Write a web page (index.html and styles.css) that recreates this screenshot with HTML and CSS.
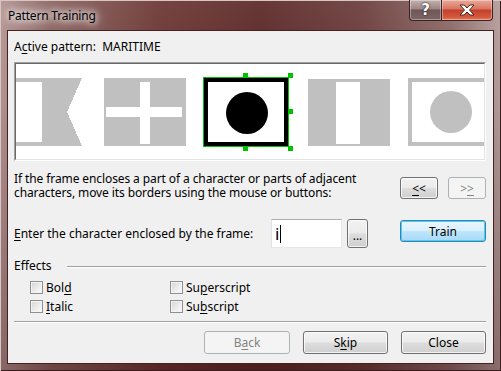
FILE: index.html
```html
<!DOCTYPE html>
<html lang="en">
<head>
    <meta charset="UTF-8" />
    <title>Pattern Training</title>
    <link rel="stylesheet" href="styles.css">
</head>
<body>
    <div class="window">
        <div class="titlebar">
            <span class="title">Pattern Training</span>
            <div class="caption-buttons">
                <div class="cap-btn help">?</div>
                <div class="cap-btn close">
                    <svg width="16" height="12" viewBox="0 0 16 12">
                        <path d="M1 1 H5 L8 4 L11 1 H15 L10.5 6 L15 11 H11 L8 8 L5 11 H1 L5.5 6 Z" fill="#fff" stroke="#4a2a22" stroke-width="1"/>
                    </svg>
                </div>
            </div>
        </div>

        <div class="client">
            <div class="active-row">A<u>c</u>tive pattern:&nbsp; MARITIME</div>

            <!-- recognised glyph strip, drawn in page coordinates -->
            <div class="pattern-box">
                <svg class="strip" width="468" height="95" viewBox="17 64 468 95" shape-rendering="crispEdges">
                    <polygon points="10,78 83,78 68,112 83,146 10,146" fill="#c0c0c0"/>
                    <rect x="10" y="82" width="33" height="60" fill="#fff"/>

                    <rect x="105" y="78" width="82" height="68" fill="#c0c0c0"/>
                    <rect x="141" y="82" width="10" height="62" fill="#fff"/>
                    <rect x="107" y="107" width="76" height="10" fill="#fff"/>

                    <rect x="204" y="77" width="86" height="70" fill="#000"/>
                    <rect x="209" y="82" width="76" height="60" fill="#fff"/>
                    <circle cx="248" cy="113" r="21" fill="#000" shape-rendering="auto"/>
                    <rect x="204.5" y="77.5" width="85" height="69" fill="none" stroke="#00c000"/>
                    <rect x="244" y="73" width="5" height="5" fill="#00c000"/>
                    <rect x="289" y="73" width="5" height="5" fill="#00c000"/>
                    <rect x="289" y="109" width="5" height="5" fill="#00c000"/>
                    <rect x="289" y="146" width="5" height="5" fill="#00c000"/>
                    <rect x="244" y="146" width="5" height="5" fill="#00c000"/>

                    <rect x="309" y="79" width="82" height="67" fill="#c0c0c0"/>
                    <rect x="337" y="82" width="24" height="62" fill="#fff"/>

                    <rect x="409" y="78" width="80" height="68" fill="#c0c0c0"/>
                    <rect x="413" y="82" width="76" height="60" fill="#fff"/>
                    <circle cx="452" cy="112" r="21" fill="#c0c0c0" shape-rendering="auto"/>
                </svg>
            </div>

            <div class="hint-row">
                <p class="hint">If the frame encloses a part of a character or parts of adjacent<br>characters, move its borders using the mouse or buttons:</p>
                <div class="nav-buttons">
                    <button class="btn nav"><u>&lt;</u>&lt;</button>
                    <button class="btn nav" disabled>&gt;<u>&gt;</u></button>
                </div>
            </div>

            <div class="enter-row">
                <span class="enter-label"><u>E</u>nter the character enclosed by the frame:</span>
                <div class="char-input">i<span class="caret"></span></div>
                <button class="btn dots">...</button>
                <button class="btn default train">Train</button>
            </div>

            <div class="group-head">
                <span>Effects</span>
                <div class="etched"></div>
            </div>

            <div class="effects">
                <label class="check"><span class="box"></span><span>Bol<u>d</u></span></label>
                <label class="check"><span class="box"></span><span>Su<u>p</u>erscript</span></label>
                <label class="check"><span class="box"></span><span><u>I</u>talic</span></label>
                <label class="check"><span class="box"></span><span>Su<u>b</u>script</span></label>
            </div>

            <div class="separator"></div>

            <div class="footer">
                <button class="btn wide" disabled>B<u>a</u>ck</button>
                <button class="btn wide">S<u>k</u>ip</button>
                <button class="btn wide">Close</button>
            </div>
        </div>
    </div>
</body>
</html>
```

FILE: styles.css
```css
html, body {
    margin: 0;
    padding: 0;
    width: 100%;
    height: 100%;
    overflow: hidden;
}

body {
    font-family: "Noto Sans", "Open Sans", sans-serif;
    font-size: 12px;
    color: #000;
}

u {
    text-decoration-thickness: 1px;
    text-underline-offset: 2px;
}

.window {
    width: 501px;
    height: 371px;
    display: flex;
    flex-direction: column;
    box-sizing: border-box;
    background:
        linear-gradient(180deg, rgba(255, 255, 255, 0.08) 0%, rgba(0, 0, 0, 0) 25%, rgba(40, 5, 5, 0.3) 100%),
        linear-gradient(90deg, #b29492 0%, #8a625f 10%, #6a3533 32%, #5a2726 52%, #693b39 72%, #8a6866 90%, #b39c9a 100%);
    box-shadow: inset 1px 1px 0 #d9c6c4, inset -1px -1px 0 #3a1c1c;
}

/* title bar */
.titlebar {
    height: 30px;
    display: flex;
    align-items: flex-start;
    justify-content: space-between;
    flex-shrink: 0;
}

.title {
    margin: 8px 0 0 8px;
    line-height: 16px;
    letter-spacing: -0.2px;
    text-shadow: 0 0 6px #fff, 0 0 10px #fff, 0 0 14px rgba(255, 255, 255, 0.9);
}

.caption-buttons {
    display: flex;
    margin-right: 8px;
}

.cap-btn {
    height: 20px;
    display: flex;
    align-items: center;
    justify-content: center;
    border: 1px solid #3c2222;
    border-top: none;
    box-shadow: inset 0 0 0 1px rgba(255, 255, 255, 0.35);
}

.help {
    width: 31px;
    border-radius: 0 0 0 4px;
    border-right: none;
    background: linear-gradient(180deg, #c4b1b0 0%, #9c8584 45%, #6e5655 50%, #7c6665 100%);
    color: #fff;
    font-family: "DejaVu Sans", sans-serif;
    font-weight: bold;
    font-size: 15px;
    text-shadow: 0 0 1px #222, 0 0 2px #222;
}

.close {
    width: 50px;
    border-radius: 0 0 4px 0;
    background: linear-gradient(180deg, #e9a99a 0%, #d9745f 45%, #c2402b 50%, #d3583e 85%, #e27b5c 100%);
}

/* client area */
.client {
    flex: 1;
    margin: 0 7px 7px 7px;
    border: 1px solid #45221f;
    background: #f0f0f0;
    padding: 0 7px 0 6px;
    display: flex;
    flex-direction: column;
}

.active-row {
    margin-top: 8px;
    line-height: 15px;
    height: 15px;
}

.pattern-box {
    margin-top: 8px;
    height: 99px;
    box-sizing: border-box;
    border-style: solid;
    border-width: 1px;
    border-color: #a0a0a0 #ffffff #ffffff #a0a0a0;
    background: #fff;
}

.strip {
    display: block;
    border-top: 1px solid #696969;
    border-left: 1px solid #696969;
    border-right: 1px solid #e3e3e3;
    border-bottom: 1px solid #e3e3e3;
}

.hint-row {
    margin-top: 11px;
    display: flex;
    justify-content: space-between;
    align-items: flex-start;
}

.hint {
    margin: 0;
    line-height: 14px;
    letter-spacing: -0.1px;
}

.nav-buttons {
    margin-top: 5px;
    display: flex;
    gap: 10px;
}

/* buttons */
.btn {
    font-family: inherit;
    font-size: 12px;
    color: #000;
    height: 23px;
    padding: 0;
    box-sizing: border-box;
    border: 1px solid #707070;
    border-radius: 3px;
    background: linear-gradient(180deg, #f2f2f2 0%, #ebebeb 48%, #dddddd 52%, #cfcfcf 100%);
    box-shadow: inset 0 0 0 1px rgba(255, 255, 255, 0.75);
}

.btn:disabled {
    color: #838383;
    border-color: #adb2b5;
    background: #f4f4f4;
    box-shadow: none;
}

.btn.nav {
    width: 38px;
    height: 22px;
}

.btn.default {
    border-color: #3c7fb1;
    background: linear-gradient(180deg, #eaf6fd 0%, #d9f0fc 48%, #bee6fd 52%, #a7d9f5 100%);
    box-shadow: inset 0 0 0 1px #48d1f7;
}

.enter-row {
    margin-top: 19px;
    height: 29px;
    display: flex;
    align-items: center;
}

.enter-label {
    width: 257px;
    flex-shrink: 0;
}

.char-input {
    width: 71px;
    height: 29px;
    box-sizing: border-box;
    border: 1px solid #abadb3;
    border-color: #abadb3 #e3e9ef #e3e9ef #e2e3ea;
    background: #fff;
    padding-left: 3px;
    font-size: 17px;
    line-height: 27px;
    display: flex;
    align-items: center;
}

.caret {
    width: 1px;
    height: 18px;
    background: #000;
    margin-left: 1px;
}

.btn.dots {
    width: 21px;
    height: 29px;
    margin-left: 5px;
    line-height: 32px;
}

.btn.train {
    width: 86px;
    height: 22px;
    margin-left: auto;
    align-self: flex-start;
    margin-top: 1px;
}

/* effects group */
.group-head {
    margin-top: 11px;
    height: 14px;
    display: flex;
    align-items: center;
    line-height: 14px;
}

.etched {
    flex: 1;
    margin-left: 15px;
    height: 1px;
    background: #a0a0a0;
    box-shadow: 0 1px 0 #fff;
}

.effects {
    margin-top: 5px;
    padding-left: 16px;
    display: grid;
    grid-template-columns: 140px 1fr;
    grid-auto-rows: 19px;
}

.check {
    display: flex;
    align-items: center;
    gap: 3px;
}

.box {
    width: 13px;
    height: 13px;
    box-sizing: border-box;
    border: 1px solid #8e8f8f;
    background: linear-gradient(135deg, #d3d3d3 0%, #eeeeee 60%, #fbfbfb 100%);
    box-shadow: inset 0 0 0 1px #f4f4f4;
}

.separator {
    margin-top: 5px;
    height: 1px;
    background: #a0a0a0;
    box-shadow: 0 1px 0 #fff;
}

.footer {
    margin-top: 9px;
    display: flex;
    justify-content: flex-end;
    gap: 13px;
}

.btn.wide {
    width: 85px;
}

.footer .btn.wide:first-child {
    width: 86px;
}
```
